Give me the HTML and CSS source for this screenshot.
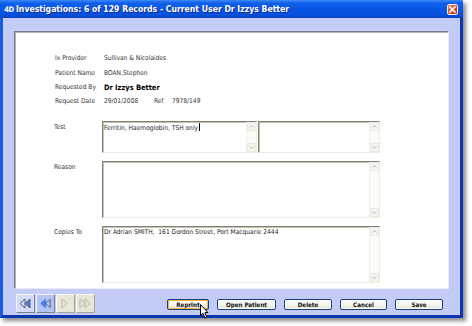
FILE: index.html
```html
<!DOCTYPE html>
<html>
<head>
<meta charset="utf-8">
<link rel="stylesheet" href="styles.css">
</head>
<body>
<div class="window">
  <div class="titlebar">
    <span class="logo">4D</span>
    <span class="title">Investigations: 6 of 129 Records - Current User Dr Izzys Better</span>
    <span class="close"><svg width="11" height="11" viewBox="0 0 11 11"><path d="M3 3L8 8M8 3L3 8" stroke="#fff" stroke-width="1.6" stroke-linecap="square"/></svg></span>
  </div>
  <div class="client">
    <div class="panel">
      <div class="info">
        <div class="lbl">Ix Provider</div><div class="val">Sullivan &amp; Nicolaides</div>
        <div class="lbl">Patient Name</div><div class="val">BOAN,Stephen</div>
        <div class="lbl tight">Requested By</div><div class="val tight strong">Dr Izzys Better</div>
        <div class="lbl">Request Date</div><div class="val"><span class="date">29/01/2008</span><span class="ref">Ref</span><span>7978/149</span></div>
      </div>
      <div class="form">
        <div class="flabel">Test</div>
        <div class="pair">
          <div class="field f-test">
            <div class="text">Ferritin, Haemoglobin, TSH only<span class="caret"></span></div>
            <div class="scroll"><div class="arr"><svg width="7" height="7" viewBox="0 0 7 7"><path d="M1.5 4.5L3.5 2.5L5.5 4.5" fill="none" stroke="#b9b8ae" stroke-width="1"/></svg></div><div class="track"></div><div class="arr"><svg width="7" height="7" viewBox="0 0 7 7"><path d="M1.5 2.5L3.5 4.5L5.5 2.5" fill="none" stroke="#b9b8ae" stroke-width="1"/></svg></div></div>
          </div>
          <div class="field f-test2">
            <div class="text"></div>
            <div class="scroll"><div class="arr"><svg width="7" height="7" viewBox="0 0 7 7"><path d="M1.5 4.5L3.5 2.5L5.5 4.5" fill="none" stroke="#b9b8ae" stroke-width="1"/></svg></div><div class="track"></div><div class="arr"><svg width="7" height="7" viewBox="0 0 7 7"><path d="M1.5 2.5L3.5 4.5L5.5 2.5" fill="none" stroke="#b9b8ae" stroke-width="1"/></svg></div></div>
          </div>
        </div>
        <div class="flabel">Reason</div>
        <div class="field f-big">
          <div class="text"></div>
          <div class="scroll"><div class="arr"><svg width="7" height="7" viewBox="0 0 7 7"><path d="M1.5 4.5L3.5 2.5L5.5 4.5" fill="none" stroke="#b9b8ae" stroke-width="1"/></svg></div><div class="track"></div><div class="arr"><svg width="7" height="7" viewBox="0 0 7 7"><path d="M1.5 2.5L3.5 4.5L5.5 2.5" fill="none" stroke="#b9b8ae" stroke-width="1"/></svg></div></div>
        </div>
        <div class="flabel">Copies To</div>
        <div class="field f-big">
          <div class="text">Dr Adrian SMITH,&nbsp; 161 Gordon Street, Port Macquarie 2444</div>
          <div class="scroll"><div class="arr"><svg width="7" height="7" viewBox="0 0 7 7"><path d="M1.5 4.5L3.5 2.5L5.5 4.5" fill="none" stroke="#b9b8ae" stroke-width="1"/></svg></div><div class="track"></div><div class="arr"><svg width="7" height="7" viewBox="0 0 7 7"><path d="M1.5 2.5L3.5 4.5L5.5 2.5" fill="none" stroke="#b9b8ae" stroke-width="1"/></svg></div></div>
        </div>
      </div>
    </div>
    <div class="bottombar">
      <div class="nav">
        <div class="nbtn first"><svg width="17" height="17" viewBox="0 0 17 17"><path d="M8 4L3 8.5L8 13Z" fill="none" stroke="#55606e" stroke-width="1"/><path d="M13 4L8 8.5L13 13Z" fill="#3f7ff0" stroke="#55606e" stroke-width="1"/></svg></div>
        <div class="nbtn prev"><svg width="18" height="17" viewBox="0 0 18 17"><path d="M9 4L4 8.5L9 13Z" fill="#3f7ff0" stroke="#3f7ff0" stroke-width="1"/><path d="M14 4L9 8.5L14 13Z" fill="none" stroke="#55606e" stroke-width="1"/></svg></div>
        <div class="nbtn off"><svg width="17" height="17" viewBox="0 0 17 17"><path d="M5 4L10 8.5L5 13Z" fill="none" stroke="#bcb8aa" stroke-width="1"/></svg></div>
        <div class="nbtn off"><svg width="17" height="17" viewBox="0 0 17 17"><path d="M3 4L8 8.5L3 13Z" fill="none" stroke="#bcb8aa" stroke-width="1"/><path d="M8 4L13 8.5L8 13Z" fill="none" stroke="#bcb8aa" stroke-width="1"/></svg></div>
      </div>
      <div class="actions">
        <div class="btn hot w-reprint">Reprint</div>
        <div class="btn w-open">Open Patient</div>
        <div class="btn w-delete">Delete</div>
        <div class="btn w-cancel">Cancel</div>
        <div class="btn w-save">Save</div>
      </div>
    </div>
  </div>
  <svg class="cursor" width="10" height="16" viewBox="0 0 10 16"><path d="M0.5 0.5L0.5 11.5L3 9.2L5 14L6.8 13.2L4.9 8.6L8 8.6Z" fill="#fff" stroke="#000" stroke-width="1" stroke-linejoin="miter"/></svg>
</div>
</body>
</html>
```

FILE: styles.css
```css
html, body {
  margin: 0;
  padding: 0;
  background: #ffffff;
}
body {
  width: 472px;
  height: 326px;
  overflow: hidden;
  font-family: "DejaVu Sans", "Liberation Sans", sans-serif;
  font-stretch: condensed;
}
.window {
  position: relative;
  width: 463px;
  height: 318px;
  box-sizing: border-box;
  background: #c3cbf7;
  border-left: 3px solid #1c5ae0;
  border-right: 3px solid #0b36b0;
  border-bottom: 3px solid #0b36b0;
  box-shadow: 3px 3px 4px rgba(0,0,0,0.45);
  display: flex;
  flex-direction: column;
}
.titlebar {
  height: 18px;
  margin: 0 -3px;
  display: flex;
  align-items: center;
  background: linear-gradient(#3d8af6 0px, #1060ea 3px, #0a56e4 9px, #0650dc 15px, #0444c4 18px);
  color: #fff;
}
.logo {
  width: 12px;
  margin-left: 3px;
  margin-right: 1px;
  font-size: 7.5px;
  font-weight: bold;
  letter-spacing: -0.5px;
  text-align: center;
}
.title {
  font-size: 8.6px;
  font-weight: bold;
  white-space: nowrap;
  text-shadow: 1px 1px 0 #0a2a90;
}
.close {
  margin-left: auto;
  margin-right: 5px;
  width: 11px;
  height: 11px;
  box-sizing: border-box;
  border: 1px solid #f4f0f0;
  border-radius: 2px;
  background: linear-gradient(135deg, #f08a68, #d8401c 60%, #c03010);
  display: flex;
  align-items: center;
  justify-content: center;
}
.close svg { display: block; margin: -1px; }
.client {
  flex: 1;
  display: flex;
  flex-direction: column;
  padding: 13px 11px 0 11px;
}
.panel {
  height: 258px;
  box-sizing: border-box;
  background: #fff;
  border-top: 1px solid #7c7c84;
  border-left: 1px solid #7c7c84;
  border-right: 1px solid #e8ecfc;
  border-bottom: 1px solid #e8ecfc;
  box-shadow: inset 1px 1px 0 #b4b4bc;
  padding: 19px 0 0 40px;
  font-size: 6.6px;
  color: #333;
}
.info {
  display: grid;
  grid-template-columns: 49px auto;
  line-height: 15px;
}
.info .tight { line-height: 13px; }
.strong {
  font-weight: bold;
  font-size: 7.4px;
  color: #000;
}
.date { display: inline-block; width: 50px; }
.ref { display: inline-block; width: 18px; }
.form {
  margin-top: 12px;
  margin-left: -1px;
  display: grid;
  grid-template-columns: 48px 278px;
  grid-template-rows: 32px 57px 57px;
  row-gap: 8px;
}
.form .flabel { line-height: 11px; padding-top: 1px; }
.pair {
  display: flex;
  gap: 1px;
}
.field {
  display: flex;
  box-sizing: border-box;
  background: #fff;
  border-top: 1px solid #858172;
  border-left: 1px solid #858172;
  border-right: 1px solid #f0eee4;
  border-bottom: 1px solid #f0eee4;
  box-shadow: inset 1px 1px 0 #c4c1b4;
}
.f-test { width: 155px; }
.f-test2 { width: 122px; }
.f-big { height: 57px; }
.field .text {
  flex: 1;
  padding: 1px 0 0 1px;
  line-height: 9px;
  color: #222;
  white-space: nowrap;
  overflow: hidden;
}
.caret {
  display: inline-block;
  width: 1px;
  height: 8px;
  background: #000;
  vertical-align: -1px;
  margin-left: 1px;
}
.scroll {
  width: 9px;
  display: flex;
  flex-direction: column;
  background: #fbfbf7;
  border-left: 1px solid #f2f1ea;
}
.scroll .arr {
  height: 9px;
  box-sizing: border-box;
  border: 1px solid #eceae0;
  background: #f6f5ef;
  display: flex;
  align-items: center;
  justify-content: center;
}
.scroll .track { flex: 1; }
.bottombar {
  display: flex;
  align-items: flex-start;
  padding: 5px 0 0 2px;
}
.nav {
  display: flex;
  gap: 1px;
}
.nbtn {
  width: 19px;
  height: 19px;
  box-sizing: border-box;
  display: flex;
  align-items: center;
  justify-content: center;
  border-top: 1px solid #f4f6ff;
  border-left: 1px solid #f4f6ff;
  border-right: 1px solid #7c7f90;
  border-bottom: 1px solid #7c7f90;
}
.nbtn.first { background: #d4daf8; }
.nbtn.prev { background: #b4c2f4; }
.nbtn.off {
  background: #e9e6d8;
  border-top-color: #fbfaf4;
  border-left-color: #fbfaf4;
  border-right-color: #a8a498;
  border-bottom-color: #a8a498;
}
.actions {
  display: flex;
  gap: 8px;
  margin-left: 72px;
  margin-top: 5px;
}
.btn {
  height: 11px;
  box-sizing: border-box;
  border: 1px solid #1c3c74;
  border-radius: 2px;
  background: linear-gradient(#ffffff, #f0f0ea 70%, #d8d6cc);
  box-shadow: inset 0 0 0 1px #ffffff;
  font-size: 6.2px;
  font-weight: bold;
  color: #111;
  line-height: 9px;
  text-align: center;
  white-space: nowrap;
}
.btn.hot {
  box-shadow: inset 0 0 0 1px #f4b83c;
}
.w-reprint { width: 42px; }
.w-open { width: 59px; }
.w-delete { width: 48px; }
.w-cancel { width: 47px; }
.w-save { width: 48px; }
.cursor {
  position: absolute;
  left: 197px;
  top: 304px;
}
```
